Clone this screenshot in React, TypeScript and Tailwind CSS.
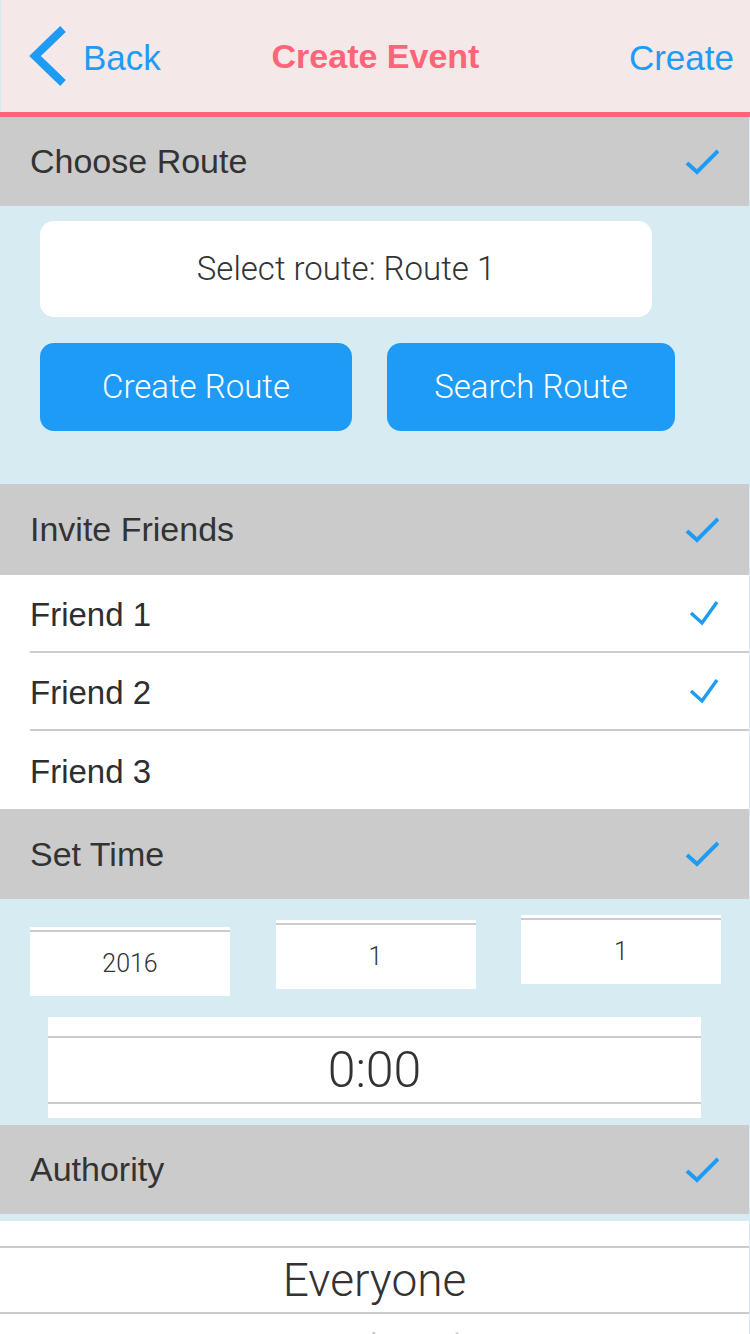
import React from 'react';

const sans = { fontFamily: '"Liberation Sans", Arial, sans-serif' };
const light = { fontFamily: 'Roboto, sans-serif' };

function Check({ small = false }: { small?: boolean }) {
    // tick mark used on section headers and selected friends
    return small ? (
        <svg width="30" height="26" viewBox="0 0 30 26" className="shrink-0">
            <polyline points="2,13 13,23 28,2" fill="none" stroke="#1e9bf5" strokeWidth="3.5" />
        </svg>
    ) : (
        <svg width="34" height="26" viewBox="0 0 34 26" className="shrink-0">
            <polyline points="2,14 12,23 33,2" fill="none" stroke="#1e9bf5" strokeWidth="4" />
        </svg>
    );
}

function SectionHeader({ title, h }: { title: string; h: string }) {
    return (
        <div className={`flex items-center justify-between bg-[#cbcbcb] pl-[30px] pr-[30px] ${h}`}>
            <span className="text-[34px] text-[#333333]" style={sans}>
                {title}
            </span>
            <Check />
        </div>
    );
}

function FriendRow({ name, checked, line }: { name: string; checked: boolean; line: boolean }) {
    return (
        <div className="pl-[30px] bg-white">
            <div className={`flex h-[78px] items-center justify-between pr-[30px] ${line ? 'border-b-2 border-[#cbcbcb]' : ''}`}>
                <span className="text-[33px] text-[#2e2e2e] mt-[3px]" style={sans}>
                    {name}
                </span>
                {checked && <Check small />}
            </div>
        </div>
    );
}

function DateBox({ value, mt }: { value: string; mt: string }) {
    return (
        <div className={`w-[200px] h-[69px] bg-white pt-[3px] flex flex-col ${mt}`}>
            <div className="h-[2px] bg-[#cbcbcb]" />
            <div className="flex-1 flex items-center justify-center text-[25px] font-light text-[#333]" style={light}>
                {value}
            </div>
        </div>
    );
}

export default function App() {
    return (
        <div className="w-[750px] h-[1334px] overflow-hidden bg-[#d6ebf2]">
            {/* nav bar */}
            <div className="grid grid-cols-[1fr_auto_1fr] items-center h-[112px] bg-[#f5e8e8] pl-[28px] pr-[16px] ml-[1px]">
                <div className="flex items-center gap-[16px] text-[#1e9bf5]">
                    <svg width="38" height="60" viewBox="0 0 38 60">
                        <polyline points="34,3 6,30 34,57" fill="none" stroke="#1e9bf5" strokeWidth="8" />
                    </svg>
                    <span className="text-[35px] mt-[4px]" style={sans}>Back</span>
                </div>
                <span className="text-[34px] font-bold text-[#ff6478] mr-[12px]" style={sans}>
                    Create Event
                </span>
                <span className="justify-self-end text-[35px] text-[#1e9bf5] mt-[4px]" style={sans}>
                    Create
                </span>
            </div>
            <div className="h-[5px] bg-[#ff6478]" />

            <div className="w-[749px]">
                <SectionHeader title="Choose Route" h="h-[89px]" />
                <div className="pt-[15px] pb-[53px] px-[40px]" style={light}>
                    <div className="w-[612px] h-[96px] rounded-[14px] bg-white flex items-center justify-center text-[33px] font-light text-[#333]">
                        Select route: Route 1
                    </div>
                    <div className="flex gap-[35px] mt-[26px]">
                        <button className="w-[312px] h-[88px] rounded-[14px] bg-[#1e9bf7] text-white text-[33px] font-light">
                            Create Route
                        </button>
                        <button className="w-[288px] h-[88px] rounded-[14px] bg-[#1e9bf7] text-white text-[33px] font-light">
                            Search Route
                        </button>
                    </div>
                </div>

                <SectionHeader title="Invite Friends" h="h-[91px]" />
                <FriendRow name="Friend 1" checked line />
                <FriendRow name="Friend 2" checked line />
                <FriendRow name="Friend 3" checked={false} line={false} />

                <SectionHeader title="Set Time" h="h-[90px]" />
                <div className="pt-[16px] pb-[7px]">
                    <div className="flex items-start justify-between pl-[30px] pr-[28px]">
                        <DateBox value="2016" mt="mt-[12px]" />
                        <DateBox value="1" mt="mt-[5px]" />
                        <DateBox value="1" mt="mt-0" />
                    </div>
                    <div className="ml-[48px] mt-[21px] w-[653px] h-[101px] bg-white pt-[19px] flex flex-col">
                        <div className="border-y-2 border-[#cbcbcb] h-[68px] flex items-center justify-center text-[50px] font-light text-[#333]" style={light}>
                            0:00
                        </div>
                    </div>
                </div>

                <SectionHeader title="Authority" h="h-[89px]" />
                <div className="mt-[7px] bg-white pt-[25px]" style={light}>
                    <div className="border-y-2 border-[#cbcbcb] h-[68px] flex items-center justify-center text-[46px] font-light text-[#333]">
                        Everyone
                    </div>
                    <div className="h-[80px] flex justify-center pt-[6px] text-[40px] font-light text-[#c4c4c4]">
                        Friends only
                    </div>
                </div>
            </div>
        </div>
    );
}
